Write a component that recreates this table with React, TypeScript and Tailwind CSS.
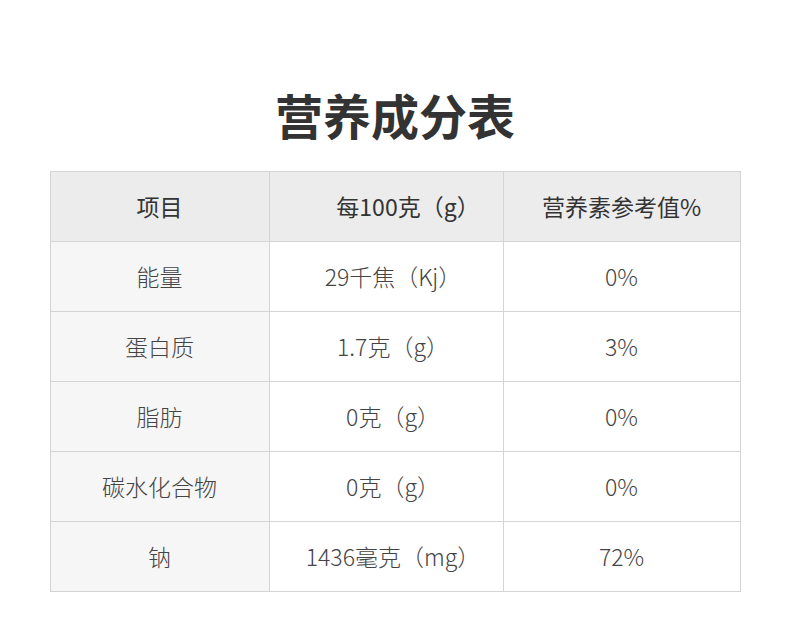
import React from "react";

const rows = [
  ["能量", "29千焦（Kj）", "0%"],
  ["蛋白质", "1.7克（g）", "3%"],
  ["脂肪", "0克（g）", "0%"],
  ["碳水化合物", "0克（g）", "0%"],
  ["钠", "1436毫克（mg）", "72%"],
];

export default function App() {
  return (
    <div
      className="w-[790px] h-[628px] bg-white flex flex-col items-center"
      style={{ fontFamily: '"Noto Sans CJK SC", "Noto Sans", sans-serif' }}
    >
      <h1 className="mt-[81px] h-[66px] flex items-center text-[48px] font-bold text-[#333] leading-none">
        营养成分表
      </h1>
      <div className="mt-[24px] w-[691px] border border-[#d4d4d4] grid grid-cols-[219px_234px_1fr]">
        <div className="h-[69px] bg-[#ececec] flex items-center justify-center text-[23px] font-normal text-[#333] border-r border-[#d4d4d4]">
          项目
        </div>
        <div className="h-[69px] bg-[#ececec] flex items-center justify-center pl-[44px] text-[23px] font-normal text-[#333] border-r border-[#d4d4d4]">
          每100克（g）
        </div>
        <div className="h-[69px] bg-[#ececec] flex items-center justify-center text-[23px] font-normal text-[#333]">
          营养素参考值%
        </div>
        {rows.map((r, i) => (
          <React.Fragment key={i}>
            <div className="h-[70px] bg-[#f6f6f6] flex items-center justify-center text-[23px] font-light text-[#444] border-t border-r border-[#d4d4d4]">
              {r[0]}
            </div>
            <div className="h-[70px] bg-white flex items-center justify-center pl-[14px] text-[23px] font-light text-[#444] border-t border-r border-[#d4d4d4]">
              {r[1]}
            </div>
            <div className="h-[70px] bg-white flex items-center justify-center text-[23px] font-light text-[#444] border-t border-[#d4d4d4]">
              {r[2]}
            </div>
          </React.Fragment>
        ))}
      </div>
    </div>
  );
}
